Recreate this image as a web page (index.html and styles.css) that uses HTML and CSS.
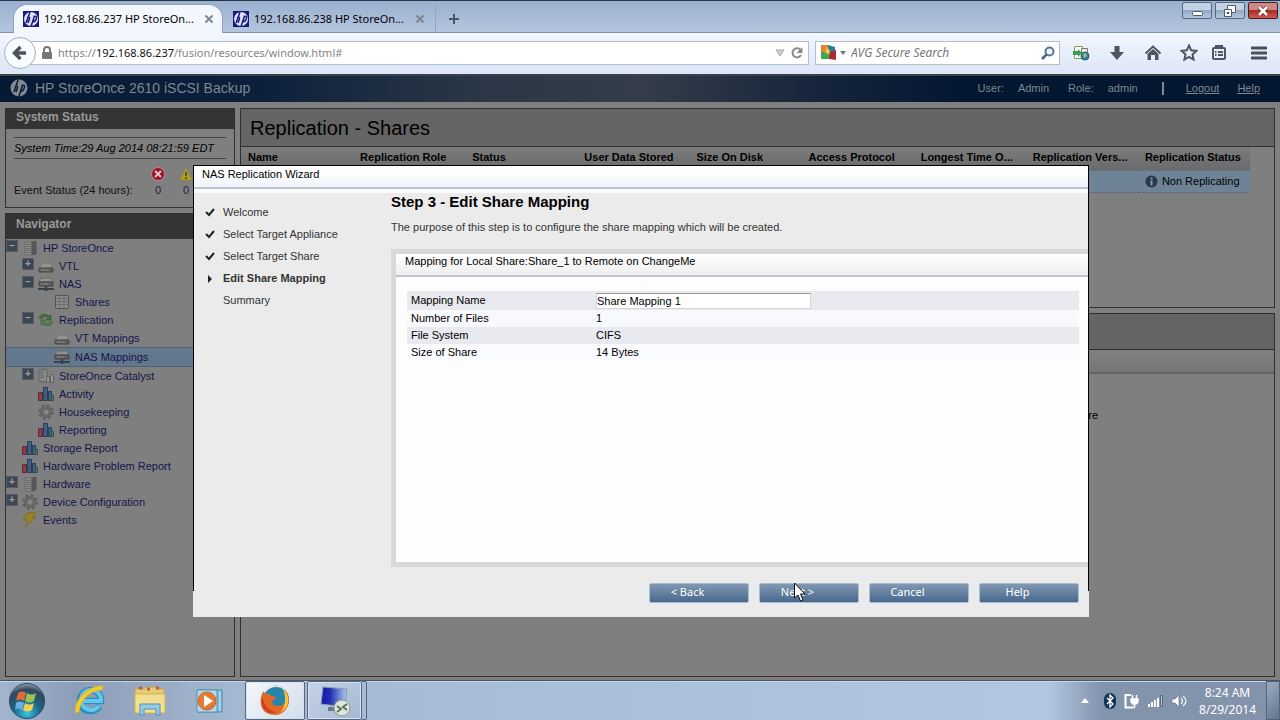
FILE: index.html
```html
<!DOCTYPE html>
<html lang="en">
<head>
<meta charset="utf-8">
<title>HP StoreOnce 2610 iSCSI Backup</title>
<link rel="stylesheet" href="styles.css">
</head>
<body>
<svg class="defs" width="0" height="0" aria-hidden="true">
  <symbol id="hpfav" viewBox="0 0 16 16"><rect width="16" height="16" fill="#17177c"/><circle cx="8" cy="8" r="7" fill="#dfe3f5"/><path d="M7 1 3 12M4 7c2-1.500 3-1 2.400 1L5 12M11.500 5 8 15.500M10.500 5.500c3-1 3.500 0 2.700 2.500-.6 2-1.500 3-4 3" fill="none" stroke="#17177c" stroke-width="1.500"/></symbol>
  <symbol id="hpgray" viewBox="0 0 18 18"><circle cx="9" cy="9" r="8.500" fill="#818991"/><path d="M8 1 4 13M5 8c2-1.500 3-1 2.400 1L6 13M12.500 6 9 17.500M11.500 6.500c3-1 3.500 0 2.700 2.500-.6 2-1.500 3.500-4 3.500" fill="none" stroke="#101e31" stroke-width="1.500"/></symbol>
  <symbol id="x" viewBox="0 0 10 10"><path d="m1.500 1.500 7 7m0-7-7 7" stroke="#7d858f" stroke-width="2"/></symbol>
  <symbol id="server" viewBox="0 0 16 16"><path d="M3 2h7v13H3z" fill="#8d8d8d" stroke="#6a6a6a"/><path d="M10 2l4-1v13l-4 1z" fill="#585858" stroke="#555"/><path d="M4 4.500h5M4 6.500h5M4 8.500h5M4 10.500h5M4 12.500h5" stroke="#686868"/></symbol>
  <symbol id="drive" viewBox="0 0 16 16"><path d="M4 5h8l3 5H1z" fill="#929292" stroke="#777"/><path d="M1 10h14v4H1z" fill="#5c5c5c" stroke="#4a4a4a"/><path d="M2.500 12h8" stroke="#8e8e8e"/><path d="M12 12h2" stroke="#536d49"/></symbol>
  <symbol id="nas" viewBox="0 0 16 16"><path d="M3 2h10l2 4H1z" fill="#929292" stroke="#6a6a6a"/><path d="M1 6h14v4H1z" fill="#5c5c5c" stroke="#444"/><path d="M2.500 8h8" stroke="#8e8e8e"/><path d="M0 13h16M8 10v4" stroke="#3b4147" stroke-width="2"/><circle cx="8" cy="13" r="2" fill="#34424e"/></symbol>
  <symbol id="sheet" viewBox="0 0 16 16"><path d="M1.500 1.500h13v13h-13z" fill="#8b8b8b" stroke="#555"/><path d="M2 4.500h12M2 7.500h12M2 10.500h12M5.500 2v12M10 2v12" stroke="#707070"/></symbol>
  <symbol id="repl" viewBox="0 0 16 16"><path d="M1 6c1-4 7-5 10-2l2-1v5H8l2-2C8 4 5 4 4 7z" fill="#466f3e" stroke="#345831" stroke-width=".6"/><path d="M15 10c-1 4-7 5-10 2l-2 1V8h5l-2 2c2 2 5 2 6-1z" fill="#54824a" stroke="#345831" stroke-width=".6"/></symbol>
  <symbol id="catalyst" viewBox="0 0 16 16"><path d="M1 2l6-1 2 1v11l-2 1-6-1z" fill="#8c8c8c" stroke="#606060"/><path d="M2 4h4M2 6h4M2 8h4M2 10h4" stroke="#686868"/><path d="M8.500 8.500h3v6h-3zM12.500 6.500h3v8h-3z" fill="#969696" stroke="#626262"/></symbol>
  <symbol id="chart" viewBox="0 0 16 16"><path d="M.5 6.500h4v8h-4z" fill="#8f3d48" stroke="#582c35"/><path d="M5.500 1.500h4v13h-4z" fill="#405f82" stroke="#293e5c"/><path d="M10.500 5.500h3v9h-3z" fill="#3c6385" stroke="#293e5c"/><path d="M13.500 9.500h2v5h-2z" fill="#527567" stroke="#35523e"/></symbol>
  <symbol id="gear" viewBox="0 0 16 16"><circle cx="8" cy="8" r="6.500" fill="none" stroke="#5d5d5d" stroke-width="2.500" stroke-dasharray="2.600 2.500"/><circle cx="8" cy="8" r="4.500" fill="#777" stroke="#666" stroke-width="3"/><circle cx="8" cy="8" r="2" fill="#8a8a8a"/></symbol>
  <symbol id="bolt" viewBox="0 0 16 16"><path d="M5 1 15 0 10 5h4L3 15l3-7H1z" fill="#9a8421" stroke="#736727" stroke-width=".7"/></symbol>
  <symbol id="tick" viewBox="0 0 10 10"><path d="m1 5 3 3 5-6" fill="none" stroke="#222" stroke-width="2"/></symbol>
</svg>

<header class="tabstrip">
  <div class="tab active"><svg class="fav"><use href="#hpfav"/></svg><span>192.168.86.237 HP StoreOn...</span><button class="plain" aria-label="Close tab"><svg class="x"><use href="#x"/></svg></button></div>
  <div class="tab"><svg class="fav"><use href="#hpfav"/></svg><span>192.168.86.238 HP StoreOn...</span><button class="plain" aria-label="Close tab"><svg class="x"><use href="#x"/></svg></button></div>
  <button class="plain newtab" aria-label="New tab"><svg width="12" height="12"><path d="M6 1v10M1 6h10" stroke="#4b5665" stroke-width="2"/></svg></button>
  <div class="wincontrols">
    <button aria-label="Minimize"><svg width="14" height="12"><rect x="2.500" y="6.500" width="10" height="4" rx="1" fill="#fff" stroke="#4d5b6f"/></svg></button>
    <button aria-label="Restore"><svg width="14" height="12"><path d="M4.500.5h8v7h-8z" fill="#fff" stroke="#4d5b6f"/><path d="M1.500 4.500h7v7h-7z" fill="#fff" stroke="#4d5b6f"/><path d="M4 7.500h2v1H4z" fill="#9eb0c8" stroke="#4d5b6f"/></svg></button>
    <button class="closewin" aria-label="Close"><svg width="14" height="12"><path d="m3 2 8 8m0-8-8 8" stroke="#6c2b2b" stroke-width="4"/><path d="m3 2 8 8m0-8-8 8" stroke="#fff" stroke-width="2.500"/></svg></button>
  </div>
</header>

<nav class="toolbar">
  <button class="back" aria-label="Go back"><svg width="16" height="16"><path d="M8.500 2 2.500 8l6 6M3 8h11" fill="none" stroke="#4d535a" stroke-width="3.500"/></svg></button>
  <div class="urlbar">
    <svg width="12" height="14"><path d="M3 7V4a3 3 0 0 1 6 0v3" fill="none" stroke="#777" stroke-width="2"/><rect x="1" y="6" width="10" height="7" rx="1" fill="#777"/></svg>
    <span class="url">https://<b>192.168.86.237</b>/fusion/resources/window.html#</span>
    <svg width="10" height="8"><path d="M1 1h8L5 7z" fill="#d0d0d0" stroke="#aaa"/></svg>
    <button class="plain" aria-label="Reload"><svg width="14" height="14"><path d="M11 9a4.500 4.500 0 1 1-.5-5" fill="none" stroke="#8b8b8b" stroke-width="2"/><path d="M12.500 1v6h-6z" fill="#8b8b8b"/></svg></button>
  </div>
  <div class="searchbar">
    <svg width="17" height="17"><path d="M1 1h7l2 3-3 5H1z" fill="#e98528"/><path d="M8 1l7 2v7H8z" fill="#237f9a"/><path d="M1 8h8v7H1z" fill="#3da84f"/><path d="M9 8l7-2v10l-7-1z" fill="#a82c34"/><path d="M7 3l3 4-1 4-4-3z" fill="#efc64b"/></svg>
    <svg width="6" height="4"><path d="M0 0h6L3 4z" fill="#777"/></svg>
    <input type="text" placeholder="AVG Secure Search" aria-label="AVG Secure Search">
    <button class="plain" aria-label="Search"><svg width="14" height="14"><circle cx="8.500" cy="5.500" r="4" fill="#eef4fc" stroke="#56759e" stroke-width="2"/><path d="M5.500 8.500 1 13" stroke="#47638b" stroke-width="2.500"/></svg></button>
  </div>
  <div class="tools">
    <button class="plain" aria-label="Import"><svg width="18" height="16"><path d="M2.500 1.500h8v12h-8z" fill="#fff" stroke="#8e9857"/><path d="M9.500 3.500h6v9h-6z" fill="#eef0cf" stroke="#6d7688"/><circle cx="13" cy="11" r="4" fill="#327fb1" stroke="#215b83"/><path d="m11 9 3-1 1 3-3 2z" fill="#a5bf49"/><path d="M1 6h5V4l4 4-4 4v-2H1z" fill="#38a252"/></svg></button>
    <button class="plain" aria-label="Downloads"><svg width="16" height="16"><path d="M5.500 1h5v6H15l-7 8-7-8h4.500z" fill="#4f5661"/></svg></button>
    <button class="plain" aria-label="Home"><svg width="18" height="16"><path d="m1.500 8.500 7.500-7 7.500 7" fill="none" stroke="#4f5661" stroke-width="2"/><path d="m3.500 9 5.500-5 5.500 5v6H11v-5H7v5H3.500z" fill="#4f5661"/></svg></button>
    <button class="plain" aria-label="Bookmark"><svg width="18" height="17"><path d="m9 1.500 2.200 4.800 5.200.6-3.900 3.500 1.100 5.200L9 13l-4.600 2.600 1.100-5.200L1.600 6.900l5.200-.6z" fill="none" stroke="#4f5661" stroke-width="2"/></svg></button>
    <button class="plain" aria-label="Bookmarks list"><svg width="16" height="17"><rect x="2" y="4" width="12" height="11" rx="1" fill="none" stroke="#4f5661" stroke-width="2"/><path d="M5 4V2h6v2M4 8h1.500M7 8h5M4 11h1.500M7 11h5" fill="none" stroke="#4f5661" stroke-width="2"/></svg></button>
    <button class="plain" aria-label="Open menu"><svg width="16" height="14"><path d="M1 2h14M1 7h14M1 12h14" stroke="#4a505a" stroke-width="3" stroke-linecap="round"/></svg></button>
  </div>
</nav>

<section class="appbar">
  <svg width="18" height="18"><use href="#hpgray"/></svg>
  <h1>HP StoreOnce 2610 iSCSI Backup</h1>
  <div class="user"><span>User:</span><span>Admin</span><span class="role">Role:</span><span>admin</span><i></i><a href="#">Logout</a><a href="#">Help</a></div>
</section>

<main class="workspace">
  <aside class="left">
    <section class="panel status">
      <h2>System Status</h2>
      <p class="time">System Time:29 Aug 2014 08:21:59 EDT</p>
      <div class="events"><span>Event Status (24 hours):</span>
        <div><svg width="14" height="14"><circle cx="7" cy="7" r="6.500" fill="#9b1027" stroke="#bd8890"/><path d="m4 4 6 6m0-6-6 6" stroke="#d5c5c8" stroke-width="2"/></svg><span>0</span></div>
        <div><svg width="14" height="14"><path d="M7 1 13.500 13H.5z" fill="#aca127" stroke="#918933"/><path d="M7 5v4M7 10v2" stroke="#403d20" stroke-width="1.500"/></svg><span>0</span></div>
      </div>
    </section>
    <section class="panel navigator">
      <h2>Navigator</h2>
      <ul class="tree">
        <li><button class="toggle" aria-label="Collapse">−</button><svg><use href="#server"/></svg><a href="#">HP StoreOnce</a></li>
        <li class="l1"><button class="toggle" aria-label="Expand">+</button><svg><use href="#drive"/></svg><a href="#">VTL</a></li>
        <li class="l1"><button class="toggle" aria-label="Collapse">−</button><svg><use href="#nas"/></svg><a href="#">NAS</a></li>
        <li class="l2"><svg><use href="#sheet"/></svg><a href="#">Shares</a></li>
        <li class="l1"><button class="toggle" aria-label="Collapse">−</button><svg><use href="#repl"/></svg><a href="#">Replication</a></li>
        <li class="l2"><svg><use href="#drive"/></svg><a href="#">VT Mappings</a></li>
        <li class="l2 selected"><svg><use href="#nas"/></svg><a href="#">NAS Mappings</a></li>
        <li class="l1"><button class="toggle" aria-label="Expand">+</button><svg><use href="#catalyst"/></svg><a href="#">StoreOnce Catalyst</a></li>
        <li class="l1 leaf"><svg><use href="#chart"/></svg><a href="#">Activity</a></li>
        <li class="l1 leaf"><svg><use href="#gear"/></svg><a href="#">Housekeeping</a></li>
        <li class="l1 leaf"><svg><use href="#chart"/></svg><a href="#">Reporting</a></li>
        <li class="leaf"><svg><use href="#chart"/></svg><a href="#">Storage Report</a></li>
        <li class="leaf"><svg><use href="#chart"/></svg><a href="#">Hardware Problem Report</a></li>
        <li><button class="toggle" aria-label="Expand">+</button><svg><use href="#server"/></svg><a href="#">Hardware</a></li>
        <li><button class="toggle" aria-label="Expand">+</button><svg><use href="#gear"/></svg><a href="#">Device Configuration</a></li>
        <li class="leaf"><svg><use href="#bolt"/></svg><a href="#">Events</a></li>
      </ul>
    </section>
  </aside>
  <div class="right">
    <section class="panel shares">
      <h2>Replication - Shares</h2>
      <table>
        <thead><tr><th>Name</th><th>Replication Role</th><th>Status</th><th>User Data Stored</th><th>Size On Disk</th><th>Access Protocol</th><th>Longest Time O...</th><th>Replication Vers...</th><th>Replication Status</th></tr></thead>
        <tbody><tr><td></td><td></td><td></td><td></td><td></td><td></td><td></td><td></td><td><span class="state"><svg width="13" height="13"><circle cx="6.500" cy="6.500" r="6" fill="#29384b"/><path d="M6.500 5.500v5M6.500 2.500v2" stroke="#8798aa" stroke-width="2"/></svg>Non Replicating</span></td></tr></tbody>
      </table>
    </section>
    <section class="panel details"><div class="bar"></div><div class="sub"></div><p>re</p></section>
  </div>

  <section class="dialog" role="dialog" aria-labelledby="dialog-title">
    <h2 id="dialog-title">NAS Replication Wizard</h2>
    <div class="wizard">
      <ol class="steps">
        <li><svg><use href="#tick"/></svg>Welcome</li>
        <li><svg><use href="#tick"/></svg>Select Target Appliance</li>
        <li><svg><use href="#tick"/></svg>Select Target Share</li>
        <li class="current"><svg viewBox="0 0 10 10"><path d="m3 2 4 4-4 4z" fill="#222"/></svg>Edit Share Mapping</li>
        <li><svg></svg>Summary</li>
      </ol>
      <div class="step">
        <h3>Step 3 - Edit Share Mapping</h3>
        <p>The purpose of this step is to configure the share mapping which will be created.</p>
        <div class="mapping">
          <h4>Mapping for Local Share:Share_1 to Remote on ChangeMe</h4>
          <table>
            <tr><th><label for="mapping-name">Mapping Name</label></th><td><input id="mapping-name" type="text" value="Share Mapping 1"></td></tr>
            <tr><th>Number of Files</th><td>1</td></tr>
            <tr><th>File System</th><td>CIFS</td></tr>
            <tr><th>Size of Share</th><td>14 Bytes</td></tr>
          </table>
        </div>
      </div>
    </div>
    <footer>
      <button>&lt; Back</button>
      <button>Next &gt;<svg class="cursor" width="13" height="20"><path d="M1.500 1v15l3.500-3 2.500 6 2.500-1-2.500-6H12z" fill="#fff" stroke="#111"/></svg></button>
      <button>Cancel</button>
      <button>Help</button>
    </footer>
  </section>
</main>

<footer class="taskbar">
  <button class="task start" aria-label="Start"><svg width="38" height="38" viewBox="0 0 38 38"><defs><radialGradient id="orb" cx=".5" cy=".85" r=".85"><stop offset="0" stop-color="#35c6e7"/><stop offset=".45" stop-color="#1d6484"/><stop offset=".8" stop-color="#33475e"/><stop offset="1" stop-color="#91a2b5"/></radialGradient></defs><circle cx="19" cy="19" r="17.500" fill="url(#orb)" stroke="#31465f"/><path d="M10 11c3-2 5-2 8 0l-2 8c-3-2-5-2-8 0z" fill="#e36936"/><path d="M19 11c3 2 6 2 9 0l-2 8c-3 2-6 2-9 0z" fill="#9bc255"/><path d="M8 21c3-2 5-2 8 0l-2 7c-3-2-5-2-7 0z" fill="#63b2e5"/><path d="M17 21c3 2 6 2 9 0l-2 7c-3 2-6 2-9 0z" fill="#f4cf50"/></svg></button>
  <button class="task" aria-label="Internet Explorer"><svg width="34" height="34" viewBox="0 0 34 34"><path d="M26.500 22A10.500 10.500 0 1 1 28 17H10" fill="none" stroke="#278fc0" stroke-width="6.500"/><path d="M26 22A10 10 0 1 1 28 17H10" fill="none" stroke="#67c6e8" stroke-width="4"/><path d="M3 29C-1 19 14 1 30 2l-1 4C16 6 7 17 6 28z" fill="#f1cd35" stroke="#d8b52e"/></svg></button>
  <button class="task" aria-label="Explorer"><svg width="34" height="34" viewBox="0 0 34 34"><path d="M2 5h9l2-2h9l2 2h7v23H2z" fill="#e4cc72" stroke="#c5a850"/><path d="M6 4h3M14 5h3M23 4h3" stroke="#cc563f" stroke-width="3"/><path d="M2 10h30v19H2z" fill="#f2df91" stroke="#ceb45f"/><path d="M7 31V20h20v11h-4v-6H11v6z" fill="#96cbe5" stroke="#548fb6"/></svg></button>
  <button class="task" aria-label="Media Player"><svg width="30" height="28" viewBox="0 0 30 28"><path d="M3 3h24v22H3z" fill="#80bad8" stroke="#4a89b2"/><path d="M2 3h20v22H2z" fill="#b4d8e8" stroke="#5790b4"/><path d="M25 4v20" stroke="#d4edf6"/><circle cx="12" cy="14" r="9" fill="#e57a30" stroke="#c6642b"/><path d="m9 8 9 6-9 6z" fill="#fff"/></svg></button>
  <button class="task window active" aria-label="Firefox"><svg width="34" height="34" viewBox="0 0 34 34"><circle cx="18" cy="16" r="13" fill="#2686aa"/><path d="M10 4c6-4 14-2 18 3 7 9 1 24-11 24C7 31 1 24 3 14c0-3 1-5 3-7 0 2 1 3 2 3 2-1 4 0 5 2l5 1c0 2-2 3-4 4 0 3 2 5 6 5 4 0 6-2 8-5 1-6 0-10-3-13C21 1 15 1 10 4z" fill="#e26826"/><path d="M25 5c8 7 7 19-3 24 5-6 7-14 3-24z" fill="#f5c63d"/><path d="M4 13c3 8 5 14 15 15-9 4-17-4-15-15z" fill="#c74025"/></svg></button>
  <button class="task window" aria-label="Remote Desktop"><svg width="34" height="34" viewBox="0 0 34 34"><defs><linearGradient id="screen"><stop offset="0" stop-color="#1018a7"/><stop offset=".35" stop-color="#202eb3"/><stop offset="1" stop-color="#b0cbf0"/></linearGradient></defs><path d="m5 3 24 2-2 18L3 20z" fill="url(#screen)" stroke="#8b9bbb"/><path d="M10 23h9v4h-9z" fill="#6b7689"/><circle cx="24" cy="24" r="8" fill="#e0e6df" stroke="#8e9a90"/><path d="m19 22 4 3-4 3M29 20l-4 3 4 3" fill="none" stroke="#56765a" stroke-width="2"/></svg></button>
  <span class="stack"></span>
  <div class="tray">
    <svg width="8" height="5"><path d="M0 5 4 0l4 5z" fill="#fff"/></svg>
    <svg width="12" height="16"><rect width="12" height="16" rx="6" fill="#143358"/><path d="m3 5 6 6-3 3V2l3 3-6 6" fill="none" stroke="#fff" stroke-width="1.300"/></svg>
    <svg width="15" height="16"><path d="M7 2H1.500v12.500h8" fill="none" stroke="#fff" stroke-width="2"/><path d="M7 6h7v3l-2 2H9L7 9zM8.500 2v4M12.500 2v4M10.500 11v4" fill="#fff" stroke="#fff" stroke-width="1.500"/></svg>
    <svg width="16" height="14"><path d="M2 10v3M5 8v5M8 6v7M11 4v9" stroke="#fff" stroke-width="2"/><path d="M13.500 1.500h2v11h-2z" fill="#b6c2d2" stroke="#586a80"/></svg>
    <svg width="16" height="14"><path d="M1 5h3l4-4v12L4 9H1z" fill="#fff" stroke="#66758b" stroke-width=".7"/><path d="M10 4c2 2 2 4 0 6M12 2c4 3 4 7 0 10" fill="none" stroke="#eef2f8" stroke-width="1.300"/></svg>
    <time>8:24 AM<br>8/29/2014</time>
    <button class="desktop" aria-label="Show desktop"></button>
  </div>
</footer>
</body>
</html>
```

FILE: styles.css
```css
* { box-sizing: border-box; }
body { margin: 0; min-height: 100vh; display: flex; flex-direction: column; font: 11px/16px "Liberation Sans", Arial, sans-serif; color: #000; background: #7f7f7f; overflow: hidden; }
h1, h2, h3, h4, p, ul, ol { margin: 0; padding: 0; font-weight: normal; font-size: inherit; list-style: none; }
svg { display: block; flex: none; }
button, input { font: inherit; margin: 0; }
.defs { position: absolute; }
.plain { border: 0; padding: 0; background: none; }

.tabstrip { height: 33px; display: flex; border-top: 1px solid #26344a; background: linear-gradient(#9bb0cf, #b4c6de); border-bottom: 1px solid #8193ae; font: 11px/16px "Noto Sans", "Open Sans", sans-serif; flex: none; padding-left: 13px; }
.tab { width: 210px; display: flex; align-items: center; padding: 3px 8px 0 10px; margin-bottom: -1px; }
.tab.active { background: #f3f7fd; border: 1px solid #8fa2bd; border-width: 1px 1px 0; border-radius: 14px 14px 0 0; margin-top: 3px; padding: 0 8px 0 9px; }
.tab span { flex: 1; white-space: nowrap; margin-left: 5px; }
.fav { width: 16px; height: 16px; }
.x { width: 10px; height: 10px; }
.newtab { margin: 4px 0 0 2px; padding: 0 12px; border-left: 1px solid #92a4bf; }
.wincontrols { margin-left: auto; display: flex; gap: 3px; padding: 1px 2px 0 0; align-items: flex-start; }
.wincontrols button { width: 30px; height: 17px; display: flex; align-items: center; justify-content: center; padding: 0; border: 1px solid #536985; border-radius: 2px; background: linear-gradient(#c2d1e3 50%, #93a9c5 50%, #b2c5db); }
.wincontrols .closewin { background: linear-gradient(#d08a85 45%, #a82c25 50%, #cf5a4d); border-color: #471d24; }

.toolbar { height: 41px; flex: none; display: flex; align-items: center; padding: 0 13px 2px 4px; background: linear-gradient(#f3f7fd, #dce6f8); font: 11px/16px "Noto Sans", "Open Sans", sans-serif; }
.back { width: 32px; height: 32px; z-index: 1; border: 1px solid #a3b0c1; border-radius: 50%; background: #f8fbff; padding: 0 0 0 7px; }
.urlbar { flex: 1; height: 24px; margin-left: -8px; border: 1px solid #b4bfce; background: #fff; display: flex; align-items: center; padding: 0 4px 0 12px; gap: 5px; color: #858585; }
.url { flex: 1; }
.url b { font-weight: normal; color: #111; }
.searchbar { width: 245px; height: 24px; margin-left: 6px; border: 1px solid #b4bfce; background: #fff; display: flex; align-items: center; gap: 3px; padding: 0 4px; }
.searchbar input { flex: 1; min-width: 0; border: 0; padding: 0 2px; background: none; outline: 0; font-size: 12px; }
.searchbar input::placeholder { color: #777; font-style: italic; opacity: 1; }
.tools { display: flex; align-items: center; gap: 19px; margin-left: 12px; }
.tools button:nth-child(5) { margin-left: -6px; }
.tools button:nth-child(6) { margin-left: 5px; }
.tools button:nth-child(4) { margin-left: -1px; }

.appbar { height: 28px; flex: none; display: flex; align-items: center; gap: 7px; padding: 0 20px 2px 10px; border-top: 2px solid #3a4149; background: linear-gradient(90deg, #061a35, #0c203b 20%, #2c3847 38%, #343d49 50%, #14233b 65%, #041731 75%); color: #7d8792; }
.appbar h1 { font-size: 14px; }
.user { margin-left: auto; display: flex; gap: 14px; align-items: center; }
.user .role { margin-left: 5px; }
.user i { width: 2px; height: 13px; background: #7d8792; margin: 0 8px 0 10px; }
.user a { color: inherit; }
.user a + a { margin-left: 4px; }

.workspace { position: relative; flex: 1; display: flex; gap: 5px; padding: 6px 5px 3px; background: #7f7f7f; }
.left { width: 230px; display: flex; flex-direction: column; gap: 5px; }
.right { flex: 1; min-width: 0; display: flex; flex-direction: column; gap: 5px; }
.panel { border: 1px solid #303030; background: #7f7f7f; }
.left h2 { height: 20px; line-height: 16px; padding-left: 10px; font-size: 12px; font-weight: bold; color: #9a9a9a; background: #343434; }
.status { height: 100px; }
.time { margin: 8px 8px 0; padding: 2px 0; border: 1px solid #454545; border-width: 1px 0; font-style: italic; }
.events { display: flex; align-items: flex-end; padding: 8px 0 0 8px; color: #111; }
.events > span { width: 136px; }
.events div { width: 28px; display: flex; flex-direction: column; align-items: center; gap: 1px; margin-left: -6px; color: #20204a; }
.events div + div { margin-left: 0; }
.navigator { flex: 1; }
.navigator h2 { height: 25px; line-height: 20px; }
.tree li { display: flex; align-items: center; height: 18px; }
.tree svg { width: 16px; height: 16px; margin-right: 5px; }
.tree a { color: #15154a; text-decoration: none; }
.toggle { width: 12px; height: 12px; margin: 0 4px 4px 0; padding: 0; border: 1px solid #555d67; background: #3d4650; color: #9aa0a8; font: bold 10px/10px "Liberation Sans", sans-serif; }
.tree .l1 { padding-left: 16px; }
.tree .leaf { padding-left: 16px; }
.tree .l1.leaf { padding-left: 32px; }
.tree .l2 { padding-left: 48px; }
.tree .selected { height: 20px; border: 1px solid #4c6177; border-width: 1px 0; background: #63778d; }

.shares { height: 200px; }
.shares h2 { height: 38px; padding-left: 9px; line-height: 39px; font-size: 20px; background: #646464; border-bottom: 1px solid #303030; }
.shares table { width: 1009px; table-layout: fixed; border-collapse: collapse; }
.shares th { height: 23px; padding: 0 0 2px 7px; text-align: left; white-space: nowrap; background: linear-gradient(#7b7b7b, #6b6b6b); }
.shares td { height: 22px; padding: 0 0 0 7px; background: #6f8397; border: 1px dotted #4c6177; border-width: 1px 0; white-space: nowrap; }
.state { display: flex; align-items: center; gap: 4px; }
.details { flex: 1; }
.details .bar { height: 36px; background: #646464; border-bottom: 1px solid #303030; }
.details .sub { height: 24px; border-bottom: 2px solid #626262; background: linear-gradient(#808080, #767676); }
.details p { text-align: right; padding: 33px 176px 0 0; }

.dialog { position: absolute; top: 63px; left: 193px; right: 191px; height: 452px; display: flex; flex-direction: column; background: #ebebeb; }
.dialog::before { content: ""; position: absolute; inset: 0 0 26px 0; border: 1px solid #000; border-bottom: 0; pointer-events: none; }
.dialog h2 { height: 24px; line-height: 16px; padding-left: 9px; background: linear-gradient(#fff 30%, #f0f3f9); border-bottom: 2px solid #bcc4d1; border-top: 1px solid #000; }
.wizard { flex: 1; display: flex; border-top: 4px solid #fbfbfb; }
.steps { width: 198px; padding: 8px 0 0 12px; color: #333; }
.steps li { display: flex; align-items: center; gap: 8px; height: 22px; }
.steps svg { width: 10px; height: 10px; }
.steps .current { font-weight: bold; }
.step { flex: 1; display: flex; flex-direction: column; }
.step h3 { font-size: 15px; line-height: 17px; font-weight: bold; }
.step p { padding-top: 9px; color: #333; }
.mapping { margin-top: 14px; flex: 1; background: #fdfdfd; border: 5px solid #d8d8d8; border-right: 0; }
.mapping h4 { height: 23px; padding-left: 9px; line-height: 15px; background: linear-gradient(#fff, #eee); border-bottom: 2px solid #c0c2cc; }
.mapping table { width: calc(100% - 21px); margin: 14px 10px 0 11px; border-collapse: collapse; }
.mapping td, .mapping th { height: 17px; padding: 0 0 0 4px; text-align: left; font-weight: normal; line-height: 17px; }
.mapping th { width: 185px; }
.mapping tr { background: #f8f9fd; }
.mapping tr:nth-child(odd) { background: #e9eaef; }
.mapping tr:last-child { background: #fafbfe; }
.mapping input { display: block; width: 215px; height: 16px; margin: 2px 0 1px; padding: 0; border: 1px solid #d6d6d6; border-top-color: #999; background: #fff; }
.dialog footer { height: 50px; flex: none; display: flex; justify-content: flex-end; gap: 10px; padding: 16px 10px 0 0; }
.dialog footer button { position: relative; width: 100px; height: 20px; padding: 0 23px 3px 0; border: 1px solid #a8bdd7; border-radius: 2px; background: linear-gradient(#8297b1, #48698e); color: #fff; font: 11px/15px "Noto Sans", "Open Sans", sans-serif; }
.cursor { position: absolute; left: 33px; top: -2px; }

.taskbar { height: 40px; flex: none; display: flex; align-items: stretch; border-top: 1px solid #4b5767; box-shadow: inset 0 1px #c8d5e6; background: linear-gradient(90deg, #a2b4ce, #8c9db7 6%, #a4b7d1 18%, #aabfdb 45%, #b2c6e0 82%, #8394ad 86%, #8192aa); padding-left: 7px; }
.task { width: 60px; display: flex; align-items: center; justify-content: center; padding: 0; border: 0; background: none; }
.task.start { width: 40px; margin-right: 13px; }
.task.window { width: 55px; border: 1px solid #55677f; border-radius: 2px; background: linear-gradient(135deg, #c6d3e5, #a4b8d2); box-shadow: inset 0 0 0 1px #d6e0ee; }
.task.window.active { width: 60px; margin: 0 2px 0 5px; background: linear-gradient(135deg, #f4f7fb, #d2deee); }
.stack { width: 5px; border: 1px solid #55677f; border-left: 0; border-radius: 0 2px 2px 0; }
.tray { margin-left: auto; display: flex; align-items: center; color: #fff; gap: 8px; }
.tray svg:first-child { margin-right: 7px; }
.tray time { margin-left: 4px; padding-top: 1px; text-align: center; font: 12px/17px "Noto Sans", "Open Sans", sans-serif; }
.desktop { align-self: stretch; width: 14px; margin-left: 2px; border: 1px solid #53637a; background: linear-gradient(135deg, #9cabc0, #65758e); }
```
